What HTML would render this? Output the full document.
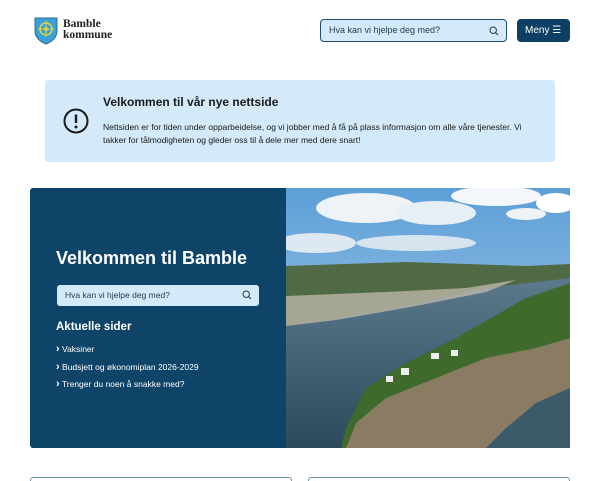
<!DOCTYPE html>
<html><head><meta charset="utf-8"><style>
*{margin:0;padding:0;box-sizing:border-box}
body{width:600px;height:480px;overflow:hidden;background:#fff;font-family:"Liberation Sans",sans-serif;position:relative;color:#1a1a1a}
.abs{position:absolute}
</style></head><body>
<svg class="abs" style="left:34px;top:17px" width="24" height="28" viewBox="0 0 24 28"><path d="M1 1H23V14C23 21 17 25 12 27C7 25 1 21 1 14Z" fill="#3aa0d8" stroke="#2a6f95" stroke-width="1"/><circle cx="12" cy="12" r="6" fill="none" stroke="#e2d43a" stroke-width="1.5"/><circle cx="12" cy="12" r="2" fill="#e2d43a"/><path d="M12 4V20M4 12H20" stroke="#e2d43a" stroke-width="1"/></svg>
<div class="abs" style="left:63px;top:19px;font-family:'Liberation Serif',serif;font-weight:bold;font-size:11.5px;line-height:10.5px;color:#222">Bamble<br>kommune</div>
<div class="abs" style="left:320px;top:19px;width:187px;height:23px;background:#d4e9f9;border:1.5px solid #1d4f70;border-radius:4px;font-size:9px;color:#1d3b52;padding:5px 0 0 8px">Hva kan vi hjelpe deg med?
<svg class="abs" style="right:7px;top:6px" width="10" height="10" viewBox="0 0 10 10"><circle cx="4.2" cy="4.2" r="3.2" fill="none" stroke="#333" stroke-width="1"/><path d="M6.5 6.5L9 9" stroke="#333" stroke-width="1"/></svg></div>
<div class="abs" style="left:517px;top:19px;width:53px;height:23px;background:#0d3e63;border-radius:4px;color:#fff;font-size:10px;padding:6px 0 0 8px">Meny ☰</div>

<div class="abs" style="left:45px;top:80px;width:510px;height:82px;background:#d4e9f9;border-radius:3px"></div>
<svg class="abs" style="left:63px;top:108px" width="26" height="26" viewBox="0 0 26 26"><circle cx="13" cy="13" r="11.5" fill="none" stroke="#1a1a1a" stroke-width="2"/><path d="M13 6.5V15" stroke="#1a1a1a" stroke-width="2.4"/><circle cx="13" cy="19" r="1.5" fill="#1a1a1a"/></svg>
<div class="abs" style="left:103px;top:95px;font-size:12px;font-weight:bold">Velkommen til vår nye nettside</div>
<div class="abs" style="left:103px;top:121px;width:430px;font-size:8.5px;line-height:12.5px">Nettsiden er for tiden under opparbeidelse, og vi jobber med å få på plass informasjon om alle våre tjenester. Vi takker for tålmodigheten og gleder oss til å dele mer med dere snart!</div>

<div class="abs" style="left:30px;top:188px;width:256px;height:260px;background:#0d4468;border-radius:3px 0 0 3px"></div>
<div class="abs" style="left:56px;top:248px;font-size:18px;font-weight:bold;color:#fff">Velkommen til Bamble</div>
<div class="abs" style="left:57px;top:285px;width:202px;height:21px;background:#d4e9f9;border-radius:3px;font-size:8.5px;color:#1d3b52;padding:5px 0 0 8px">Hva kan vi hjelpe deg med?
<svg class="abs" style="right:7px;top:5px" width="10" height="10" viewBox="0 0 10 10"><circle cx="4.2" cy="4.2" r="3.2" fill="none" stroke="#333" stroke-width="1"/><path d="M6.5 6.5L9 9" stroke="#333" stroke-width="1"/></svg></div>
<div class="abs" style="left:56px;top:321px;font-size:11.5px;font-weight:bold;color:#fff">Aktuelle sider</div>
<div class="abs" style="left:56px;top:341px;font-size:8.5px;color:#fff;line-height:17.5px"><b style="font-size:11px">›</b> Vaksiner<br><b style="font-size:11px">›</b> Budsjett og økonomiplan 2026-2029<br><b style="font-size:11px">›</b> Trenger du noen å snakke med?</div>

<svg class="abs" style="left:286px;top:188px" width="284" height="260" viewBox="0 0 284 260">
<defs><linearGradient id="s" x1="0" y1="0" x2="0" y2="1"><stop offset="0" stop-color="#5c9fd8"/><stop offset="1" stop-color="#b7d3ea"/></linearGradient>
<linearGradient id="w" x1="0" y1="0" x2="0" y2="1"><stop offset="0" stop-color="#5f7d8f"/><stop offset="1" stop-color="#2d4a5c"/></linearGradient></defs>
<rect width="284" height="260" fill="url(#s)"/>
<ellipse cx="80" cy="20" rx="50" ry="15" fill="#eef3f8"/><ellipse cx="150" cy="25" rx="40" ry="12" fill="#e6eef6"/><ellipse cx="210" cy="8" rx="45" ry="10" fill="#f3f6fa"/><ellipse cx="270" cy="15" rx="20" ry="10" fill="#fff"/><ellipse cx="30" cy="55" rx="40" ry="10" fill="#dde8f2"/><ellipse cx="240" cy="26" rx="20" ry="6" fill="#eef3f8"/><ellipse cx="130" cy="55" rx="60" ry="8" fill="#d6e4f0"/>
<rect y="78" width="284" height="182" fill="url(#w)"/>
<path d="M0 78L120 74L240 78L284 76V90L200 100L120 118L40 132L0 138Z" fill="#506a45"/>
<path d="M0 108L100 104L180 100L230 92L200 104L130 118L50 132L0 138Z" fill="#c9c2b4" opacity=".7"/>
<path d="M284 95L240 110L170 150L120 175L80 200L60 240L55 260H284Z" fill="#3e6a2c"/>
<path d="M284 150L250 160L200 170L150 190L100 210L70 235L60 260H284Z" fill="#8a7c62"/>
<path d="M284 200L250 215L220 240L200 260H284Z" fill="#3b5a6a"/>
<rect x="145" y="165" width="8" height="6" fill="#eee"/><rect x="165" y="162" width="7" height="6" fill="#eee"/><rect x="115" y="180" width="8" height="7" fill="#eee"/><rect x="100" y="188" width="7" height="6" fill="#eee"/>
</svg>

<div class="abs" style="left:30px;top:477px;width:262px;height:4px;border:1.5px solid #6a8fa8;border-bottom:none;border-radius:3px 3px 0 0"></div>
<div class="abs" style="left:308px;top:477px;width:262px;height:4px;border:1.5px solid #6a8fa8;border-bottom:none;border-radius:3px 3px 0 0"></div>
</body></html>
